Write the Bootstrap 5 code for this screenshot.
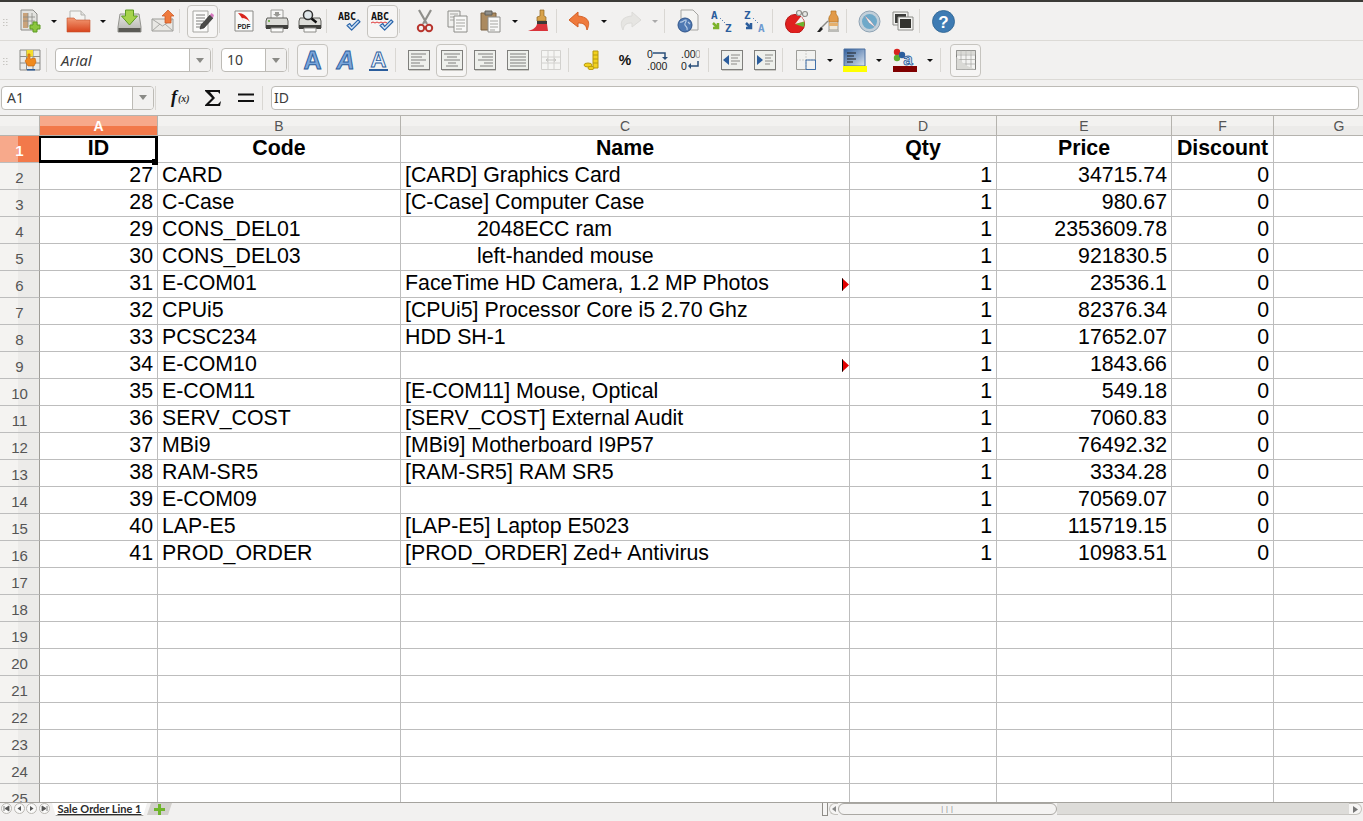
<!DOCTYPE html>
<html>
<head>
  <meta charset="utf-8">
  <meta name="viewport" content="width=device-width">
  <title>Sale Order Line</title>
  <link href="https://cdn.jsdelivr.net/npm/bootstrap@5.3.3/dist/css/bootstrap.min.css" rel="stylesheet"/>
  <style>
    html, body { height: 100%; overflow: hidden; background: #f2f1f0; }
    body { font-family: "Noto Sans", sans-serif; color: #3c3c3c; }
    .app-shell { height: 821px; border-top: 2px solid #3c3b37; }

    .tool-row { height: 38px; border-bottom: 1px solid #dcdad6; box-sizing: content-box; }
    .grip { width: 13px; padding-left: 3px; }
    .slot { width: 33px; height: 33px; flex: none; }
    .slot svg { display: block; }
    .slot-on { width: 33px; height: 33px; flex: none; }
    .slot-on > span { width: 31px; height: 33px; border: 1px solid #c6c4bf; border-radius: 4px; background: #f6f5f4; }
    .drop { width: 16px; flex: none; }
    .drop::after { content: ""; display: block; border-left: 3px solid transparent; border-right: 3px solid transparent; border-top: 3px solid #111; }
    .drop-off::after { border-top-color: #aaa; }
    .tsep { width: 7px; height: 24px; flex: none; }
    .tsep::after { content: ""; display: block; width: 1px; height: 100%; background: #d9d7d3; }
    .ml1 { margin-left: 1px; }
    .ml2 { margin-left: 2px; }

    .combo { height: 24px; border: 1px solid #bdbbb6; border-radius: 4px; background: #fff; flex: none; font-size: 14px; }
    .combo-text { padding-left: 5px; line-height: 22px; }
    .combo-btn { width: 21px; border-left: 1px solid #bdbbb6; background: #f2f1f0; border-radius: 0 3px 3px 0; }
    .combo-btn::after { content: ""; display: block; border-left: 4px solid transparent; border-right: 4px solid transparent; border-top: 5px solid #8a8a86; }
    .font-box { width: 156px; margin-left: 2px; font-size: 15px; }
    .size-box { width: 66px; margin-left: 2px; }
    .name-box { width: 153px; margin-left: 1px; }

    .formula-row { height: 35px; }
    .formula-input { width: 1088px; height: 24px; margin-left: 2px; border: 1px solid #bdbbb6; border-radius: 4px; background: #fff; font-size: 14px; line-height: 22px; padding-left: 2px; }
    .fx-slot { width: 33px; height: 24px; flex: none; }

    .sheet-wrap { height: 687px; overflow: hidden; border-top: 1px solid #b5b3ae; background: #fff; }
    .sheet { width: 1405px; table-layout: fixed; border-collapse: separate; border-spacing: 0; font-family: "Liberation Sans", Arial, sans-serif; color: #000; }
    .w-head { width: 40px; } .w-a { width: 118px; } .w-b { width: 243px; } .w-c { width: 449px; }
    .w-d { width: 147px; } .w-e { width: 175px; } .w-f { width: 102px; } .w-g { width: 131px; }
    .sheet th, .sheet td { padding: 0 4px; border-right: 1px solid #bdbdbd; border-bottom: 1px solid #bdbdbd; white-space: nowrap; overflow: hidden; }
    .sheet td { height: 27px; font-size: 21.33px; line-height: 23px; vertical-align: bottom; padding-bottom: 2px; background: #fff; position: relative; }
    .sheet thead th { height: 20px; font-size: 14px; line-height: 18px; font-weight: 400; color: #555; text-align: center; background: linear-gradient(#f3f2f0 50%, #ecebe9 50%); border-color: #b5b3ae; }
    .sheet tbody th { font-size: 15px; line-height: 18px; font-weight: 400; color: #555; text-align: center; vertical-align: bottom; padding: 0 0 2px; background: linear-gradient(90deg, #f4f3f1 45%, #ecebe9 45%); border-color: #9f9d98; border-bottom-color: #bdbdbd; }
    .sheet thead th.col-on { background: linear-gradient(#f7a98b 50%, #f2794a 50%); color: #fff; font-weight: 700; }
    .sheet tbody th.row-on { background: linear-gradient(90deg, #f7a98b 45%, #f2794a 45%); color: #fff; font-weight: 700; }
    .sheet td.hd { font-weight: 700; text-align: center; }
    .sheet td.num { text-align: right; }
    .sheet td.indent { padding-left: 76px; }
    .sheet td.cur { overflow: visible; z-index: 2; }
    .cur-box { position: absolute; left: -1px; top: 0; right: -1px; bottom: -1px; border: 2px solid #000; border-right-width: 3px; border-bottom-width: 3px; pointer-events: none; }
    .cur-box::after { content: ""; position: absolute; right: -3px; bottom: -5px; width: 6px; height: 6px; background: #000; }
    .more { position: absolute; right: 0; top: 7px; width: 7px; height: 13px; background: #e00000; border-left: 1px solid #000; clip-path: polygon(0 0, 100% 50%, 0 100%); }

    .bottom-bar { height: 13px; border-top: 1px solid #a5a39e; background: #f2f1f0; }
    .nav-dot { width: 11px; height: 11px; margin-right: 1.5px; border: 1px solid #bab8b3; border-radius: 50%; background: #fafaf9; flex: none; }
    .nav-first { margin-left: 1px; }
    .sheet-tab { width: 95px; height: 13px; margin-left: 1px; flex: none; font-family: Lato, sans-serif; font-size: 11px; font-weight: 700; line-height: 12px; text-align: center; color: #2c2c2c; text-decoration: underline; background: #fff; border-bottom: 1px solid #a5a39e; clip-path: polygon(0 0, 100% 0, 96% 100%, 4% 100%); }
    .add-tab { width: 25px; height: 12px; flex: none; background: #d2d0cc; clip-path: polygon(16% 0, 100% 0, 84% 100%, 0 100%); }
    .split-grip { width: 6px; height: 13px; margin-left: 650px; flex: none; border: 1px solid #8f8d88; border-top: 0; background: #f6f5f4; }
    .scroll-btn { width: 9px; height: 12px; margin-left: 1px; flex: none; border: 1px solid #c4c2bd; background: #f6f5f4; }
    .scroll-btn-l { border-radius: 6px 0 0 6px; border-right: 0; }
    .scroll-btn-r { width: 13px; border-radius: 0 6px 6px 0; border-left: 0; margin-left: 0; }
    .scroll-thumb { width: 219px; height: 12px; flex: none; border: 1px solid #aaa8a3; border-radius: 6px; background: #f4f3f2; font-size: 7px; line-height: 10px; letter-spacing: 1px; color: #777; }
    .scroll-trough { width: 292px; height: 12px; flex: none; background: #dddcd9; border-bottom: 1px solid #c8c6c2; }
  </style>
</head>

<body>
  <svg width="0" height="0" class="position-absolute">
    <defs>
      <symbol id="gripDots" viewBox="0 0 5 8">
        <rect x="0" y="0" width="1.5" height="1" fill="#c8c6c2"/><rect x="3" y="0" width="1.5" height="1" fill="#c8c6c2"/>
        <rect x="0" y="3" width="1.5" height="1" fill="#c8c6c2"/><rect x="3" y="3" width="1.5" height="1" fill="#c8c6c2"/>
        <rect x="0" y="6" width="1.5" height="1" fill="#c8c6c2"/><rect x="3" y="6" width="1.5" height="1" fill="#c8c6c2"/>
      </symbol>
      <symbol id="checkMark" viewBox="0 0 16 13">
        <path d="M1 7l3-2 2 3 7-7 2 2-9 9z" fill="#cfe0f3" stroke="#2b66ab" stroke-width="1.3" stroke-linejoin="round"/>
      </symbol>
      <symbol id="alignFrame" viewBox="0 0 24 24">
        <rect x="1.5" y="2.5" width="21" height="19" fill="#eef0ec" stroke="#7f7f7c"/>
        <path d="M2 22.5h21" stroke="#c9c8c4"/>
      </symbol>
      <linearGradient id="folderFill" x1="0" y1="0" x2="0" y2="1"><stop offset="0" stop-color="#f29a74"/><stop offset="1" stop-color="#d8431c"/></linearGradient>
      <linearGradient id="driveFill" x1="0" y1="0" x2="0" y2="1"><stop offset="0" stop-color="#e6e6e3"/><stop offset="1" stop-color="#b3b3af"/></linearGradient>
      <linearGradient id="bgFill" x1="0" y1="0" x2="1" y2="1"><stop offset="0" stop-color="#2f5d9b"/><stop offset="1" stop-color="#dbe5f0"/></linearGradient>
    </defs>
  </svg>

  <div class="app-shell d-flex flex-column">

    <div class="tool-row d-flex align-items-center">
      <div class="grip"><svg width="5" height="8"><use href="#gripDots"/></svg></div>
      <div class="slot d-flex align-items-center justify-content-center">
        <svg width="24" height="24" viewBox="0 0 24 24"><path d="M3 1h12l4 4v16H3z" fill="#e3e3e0" stroke="#8c8c88"/><path d="M5 4h5v15H5z" fill="#c9a27a"/><path d="M5 8h12M5 12h12M10 4v14M14 4v14" stroke="#8a8a86" stroke-width=".8"/><path d="M15 13h4v3h3v4h-3v3h-4v-3h-3v-4h3z" fill="#8cc63f" stroke="#5d9a23"/></svg>
      </div>
      <div class="drop d-flex justify-content-center"></div>
      <div class="slot d-flex align-items-center justify-content-center">
        <svg width="25" height="23" viewBox="0 0 25 23"><path d="M4 1h11l4 4v13H4z" fill="#f4f4f2" stroke="#b5b5b1"/><path d="M15 1v4h4" fill="#e2e2df" stroke="#b5b5b1"/><path d="M1 8h7l2 2h14v12H1z" fill="url(#folderFill)" stroke="#c5502b" stroke-width=".6"/></svg>
      </div>
      <div class="drop d-flex justify-content-center"></div>
      <div class="slot ml2 d-flex align-items-center justify-content-center">
        <svg width="25" height="25" viewBox="0 0 25 25"><path d="M3 5h19l2 13v5H1v-5z" fill="url(#driveFill)" stroke="#94948f"/><path d="M1.500 19h22v4h-22z" fill="#5a5a55"/><path d="M8.500 1h8v6h4l-8 9-8-9h4z" fill="#a6d34d" stroke="#5d9a23"/></svg>
      </div>
      <div class="slot d-flex align-items-center justify-content-center">
        <svg width="24" height="22" viewBox="0 0 24 22"><path d="M1 9h21v12H1z" fill="#e9e8e4" stroke="#9c9c98"/><path d="M1 9l10.500 7L22 9M1 21l8-7M22 21l-8-7" fill="none" stroke="#a8a8a4"/><path d="M17 0l6 6h-3v7h-6V6h-3z" fill="#ee7a3d" stroke="#c9531f" stroke-width=".7"/></svg>
      </div>
      <div class="tsep"></div>
      <div class="slot-on d-flex justify-content-center"><span class="d-flex align-items-center justify-content-center">
        <svg width="22" height="23" viewBox="0 0 22 23"><path d="M1 1h15v21H1z" fill="#fbfbfa" stroke="#a5a5a1"/><path d="M4 5h9M4 8h9M4 11h8M4 14h6M4 17h5" stroke="#7f7f7c"/><path d="M8 19l1-4 9-10 3 3-9 10z" fill="#4a4a48" stroke="#222" stroke-width=".6"/><path d="M18 5l1.500-2 2.500 2-1 3z" fill="#d77ac0"/></svg>
      </span></div>
      <div class="tsep"></div>
      <div class="slot ml1 d-flex align-items-center justify-content-center">
        <svg width="20" height="22" viewBox="0 0 20 22"><path d="M1 1h18v20H1z" fill="#fafaf9" stroke="#8a8a86"/><path d="M4 3c5 0 9 3 12 9-3-3-5-4-8-4l2 4C8 8 6 5 4 3z" fill="#d9251c"/><text x="10" y="19" text-anchor="middle" font-family="Liberation Sans" font-size="6.500" font-weight="700" fill="#222">PDF</text></svg>
      </div>
      <div class="slot d-flex align-items-center justify-content-center">
        <svg width="24" height="24" viewBox="0 0 24 24"><path d="M6 1h12v9H6z" fill="#f7f7f6" stroke="#9c9c98"/><path d="M10 3h4v2h2l-4 3-4-3h2z" fill="#9a9a96"/><path d="M2 9h20l1 3v7H1v-7z" fill="#dcdcd8" stroke="#5f5f5a"/><path d="M1 16h22v4H1z" fill="#3f3f3c"/><path d="M6 19h12v4H6z" fill="#fbfbfa" stroke="#8c8c88"/><path d="M3 12h2" stroke="#5aa02c" stroke-width="1.500"/></svg>
      </div>
      <div class="slot d-flex align-items-center justify-content-center">
        <svg width="24" height="24" viewBox="0 0 24 24"><path d="M2 9h20l1 3v7H1v-7z" fill="#dcdcd8" stroke="#5f5f5a"/><path d="M1 16h22v4H1z" fill="#3f3f3c"/><path d="M6 19h12v4H6z" fill="#fbfbfa" stroke="#8c8c88"/><circle cx="10" cy="6" r="4.500" fill="#dfe6ea" stroke="#333" stroke-width="1.500"/><path d="M13.500 9.500l5 4" stroke="#111" stroke-width="2.500"/></svg>
      </div>
      <div class="tsep"></div>

      <div class="slot d-flex align-items-center justify-content-center">
        <svg width="24" height="22" viewBox="0 0 24 22"><text x="0" y="10" font-family="DejaVu Sans Mono" font-size="10" font-weight="700" fill="#111">ABC</text><use href="#checkMark" x="8" y="9" width="15" height="12"/></svg>
      </div>
      <div class="slot-on d-flex justify-content-center"><span class="d-flex align-items-center justify-content-center">
        <svg width="24" height="22" viewBox="0 0 24 22"><text x="0" y="10" font-family="DejaVu Sans Mono" font-size="10" font-weight="700" fill="#111">ABC</text><path d="M0 13l2-1 2 1 2-1 2 1 2-1 2 1 2-1 2 1" fill="none" stroke="#d22" stroke-width=".9"/><use href="#checkMark" x="8" y="9" width="15" height="12"/></svg>
      </span></div>
      <div class="tsep"></div>
      <div class="slot ml2 d-flex align-items-center justify-content-center">
        <svg width="18" height="24" viewBox="0 0 18 24"><path d="M3 1l8 14M15 1L7 15" stroke="#8f8f8b" stroke-width="2.200"/><circle cx="5" cy="19" r="3.200" fill="none" stroke="#b8352e" stroke-width="2"/><circle cx="13" cy="19" r="3.200" fill="none" stroke="#b8352e" stroke-width="2"/></svg>
      </div>
      <div class="slot d-flex align-items-center justify-content-center">
        <svg width="21" height="23" viewBox="0 0 21 23"><path d="M1 1h12v16H1z" fill="#f1f1ef" stroke="#8c8c88"/><path d="M3 4h8M3 7h8M3 10h8" stroke="#a5a5a1"/><path d="M7 6h13v16H7z" fill="#f9f9f8" stroke="#8c8c88"/><path d="M9 10h9M9 13h9M9 16h9M9 19h6" stroke="#a5a5a1"/></svg>
      </div>
      <div class="slot d-flex align-items-center justify-content-center">
        <svg width="21" height="23" viewBox="0 0 21 23"><path d="M1 3h15v17H1z" fill="#ab8a5f" stroke="#7a6040"/><path d="M5 1h7v4H5z" fill="#8f8f8b" stroke="#5f5f5b"/><path d="M8 7h12v15H8z" fill="#f9f9f8" stroke="#8c8c88"/><path d="M10 11h8M10 14h8M10 17h8M10 20h5" stroke="#a5a5a1"/></svg>
      </div>
      <div class="drop d-flex justify-content-center"></div>
      <div class="slot d-flex align-items-center justify-content-center">
        <svg width="24" height="24" viewBox="0 0 24 24"><path d="M12 1h4v6l2 1v4h-9V8l3-1z" fill="#d8a24a" stroke="#8f6520" stroke-width=".7"/><path d="M9 12h10v3H9z" fill="#3a3a38"/><path d="M9 15h10l1 7H0c4-1 8-3 9-7z" fill="#d9333a"/></svg>
      </div>
      <div class="tsep"></div>
      <div class="slot d-flex align-items-center justify-content-center">
        <svg width="23" height="20" viewBox="0 0 23 20"><path d="M10 1L1 9l9 7v-4c5 0 8 1 9 7 3-6 3-13-9-14z" fill="#ef7a3c" stroke="#d55f24"/></svg>
      </div>
      <div class="drop d-flex justify-content-center"></div>
      <div class="slot ml2 d-flex align-items-center justify-content-center">
        <svg width="22" height="20" viewBox="0 0 22 20"><path d="M12 1l9 8-9 7v-4C7 12 4 13 3 19 0 13 0 6 12 5z" fill="#e6e5e2" stroke="#dcdbd8"/></svg>
      </div>
      <div class="drop drop-off d-flex justify-content-center"></div>
      <div class="tsep ml1"></div>

      <div class="slot d-flex align-items-center justify-content-center">
        <svg width="22" height="24" viewBox="0 0 22 24"><path d="M4 1h12l5 5v15H4z" fill="#f4f4f2" stroke="#a5a5a1"/><circle cx="8" cy="16" r="7" fill="#4f79b3" stroke="#2f5489"/><path d="M3 13c3 1 3-2 6-2 1 2-2 3-1 5s3 2 2 5M11 13l2 2" fill="none" stroke="#b9cde5" stroke-width="1.200"/></svg>
      </div>
      <div class="slot ml1 d-flex align-items-center justify-content-center">
        <svg width="22" height="32" viewBox="0 -5 22 32"><text x="0" y="8.500" font-family="DejaVu Sans Mono" font-size="11" font-weight="700" fill="#2b5d9c">A</text><text x="14" y="21.500" font-family="DejaVu Sans Mono" font-size="11" font-weight="700" fill="#2b5d9c">Z</text><path d="M2 13l5 5M2 18h5v-5" fill="none" stroke="#7cb32a" stroke-width="2.500"/><path d="M9 8l5 5" stroke="#2b5d9c" stroke-dasharray="1 2"/></svg>
      </div>
      <div class="slot d-flex align-items-center justify-content-center">
        <svg width="22" height="32" viewBox="0 -5 22 32"><text x="0" y="8.500" font-family="DejaVu Sans Mono" font-size="11" font-weight="700" fill="#2b5d9c">Z</text><text x="14" y="21.500" font-family="DejaVu Sans Mono" font-size="11" font-weight="700" fill="#6f9bd1">A</text><path d="M2 13l5 5M2 18h5v-5" fill="none" stroke="#2b5d9c" stroke-width="2.500"/><path d="M9 8l5 5" stroke="#2b5d9c" stroke-dasharray="1 2"/></svg>
      </div>
      <div class="tsep ml1"></div>
      <div class="slot d-flex align-items-center justify-content-center">
        <svg width="24" height="24" viewBox="0 0 24 24"><circle cx="11" cy="15" r="9.500" fill="#e0201f" stroke="#b81514"/><path d="M11 15l9-2.500c1 2 .5 4-.5 5.500z" fill="#6bb52f"/><path d="M11 15l9-2.500c-.5-2-2-4-3-5z" fill="#f4f3f1"/><circle cx="15" cy="4" r="2.500" fill="#e8e8e5" stroke="#8c8c88" stroke-width="1.200"/><circle cx="21" cy="5" r="2.500" fill="#e8e8e5" stroke="#8c8c88" stroke-width="1.200"/></svg>
      </div>
      <div class="slot d-flex align-items-center justify-content-center">
        <svg width="23" height="24" viewBox="0 0 23 24"><path d="M12 9h9v12h-9z" fill="#efe9dc" stroke="#9c9c98"/><path d="M14 2h5v3l2 3v5h-9V8l2-3z" fill="#e29a48" stroke="#b57526" stroke-width=".7"/><path d="M12 14h9v3h-9z" fill="#e5b06c"/><path d="M11 21h11v2H11z" fill="#bcbcb8"/><path d="M11 12L3 20" stroke="#8a8a86" stroke-width="1.500"/><path d="M4 18l2 2-3 3H0z" fill="#222"/></svg>
      </div>
      <div class="tsep ml1"></div>
      <div class="slot d-flex align-items-center justify-content-center">
        <svg width="23" height="23" viewBox="0 0 23 23"><circle cx="11.500" cy="11.500" r="10.500" fill="#c2d0da" stroke="#8ea2b3" stroke-width="1"/><circle cx="11.500" cy="11.500" r="7.500" fill="#6fa9c9"/><path d="M7 6l5.500 5 5 6.500-6.500-5z" fill="#e8534c"/><path d="M7 6l4 6.500 6.500 5-5-6.500z" fill="#eef3f6"/></svg>
      </div>
      <div class="slot d-flex align-items-center justify-content-center">
        <svg width="22" height="20" viewBox="0 0 22 20"><path d="M1 1h15v13H1z" fill="#f2f2f0" stroke="#8c8c88"/><path d="M3 3h11v9H3z" fill="#3c3c3a"/><path d="M6 6h15v13H6z" fill="#f2f2f0" stroke="#8c8c88"/><path d="M8 8h11v9H8z" fill="#33332f"/></svg>
      </div>
      <div class="tsep"></div>
      <div class="slot ml1 d-flex align-items-center justify-content-center">
        <svg width="23" height="23" viewBox="0 0 23 23"><circle cx="11.500" cy="11.500" r="11" fill="#3e7bb3" stroke="#2c628f" stroke-width=".8"/><text x="11.500" y="17.500" text-anchor="middle" font-family="Liberation Sans" font-size="17" font-weight="700" fill="#fff">?</text></svg>
      </div>
    </div>

    <div class="tool-row d-flex align-items-center">
      <div class="grip"><svg width="5" height="8"><use href="#gripDots"/></svg></div>
      <div class="slot d-flex align-items-center justify-content-center">
        <svg width="22" height="22" viewBox="0 0 22 22"><path d="M1 1h20v20H1z" fill="#eaeae7" stroke="#8c8c88"/><path d="M1 7.500h20M1 14h20M7.500 1v20M14 1v20" stroke="#8c8c88"/><path d="M7.500 1H14v6.500H7.500z" fill="#f4dc2e"/><path d="M9 8V5h2v5l5-1 1 4-2 4H9l-3-5z" fill="#f08a1d" stroke="#c5620a" stroke-width=".6"/><path d="M8 20h8v1.500H8z" fill="#2b5d9c"/></svg>
      </div>
      <div class="tsep"></div>
      <div class="combo font-box d-flex">
        <div class="combo-text flex-grow-1 fst-italic">Arial</div>
        <div class="combo-btn d-flex align-items-center justify-content-center"></div>
      </div>
      <div class="tsep ml1"></div>
      <div class="combo size-box d-flex">
        <div class="combo-text flex-grow-1">10</div>
        <div class="combo-btn d-flex align-items-center justify-content-center"></div>
      </div>
      <div class="tsep ml1"></div>

      <div class="slot-on ml1 d-flex justify-content-center"><span class="d-flex align-items-center justify-content-center">
        <svg width="29" height="31" viewBox="0 0 29 31"><text x="14.500" y="24" text-anchor="middle" font-family="Liberation Sans" font-size="25" font-weight="700" fill="#7aa5da" stroke="#2b5d9c" stroke-width=".9">A</text></svg>
      </span></div>
      <div class="slot d-flex align-items-center justify-content-center">
        <svg width="33" height="33" viewBox="0 0 33 33"><text x="16.500" y="25" text-anchor="middle" font-family="Liberation Sans" font-size="25" font-style="italic" font-weight="700" fill="#7aa5da" stroke="#2b5d9c" stroke-width=".9">A</text></svg>
      </div>
      <div class="slot d-flex align-items-center justify-content-center">
        <svg width="33" height="33" viewBox="0 0 33 33"><text x="16.500" y="23" text-anchor="middle" font-family="Liberation Sans" font-size="22" font-weight="700" fill="#e8f0fa" stroke="#2b5d9c" stroke-width=".9">A</text><path d="M7 26h19" stroke="#2b5d9c" stroke-width="2"/></svg>
      </div>
      <div class="tsep"></div>

      <div class="slot d-flex align-items-center justify-content-center">
        <svg width="24" height="24" viewBox="0 0 24 24"><use href="#alignFrame"/><path d="M4 6h15M4 9h11M4 12h15M4 15h9M4 18h13" stroke="#7f7f7c"/></svg>
      </div>
      <div class="slot-on d-flex justify-content-center"><span class="d-flex align-items-center justify-content-center">
        <svg width="24" height="24" viewBox="0 0 24 24"><use href="#alignFrame"/><path d="M4 6h16M7 9h10M4 12h16M8 15h8M6 18h12" stroke="#7f7f7c"/></svg>
      </span></div>
      <div class="slot d-flex align-items-center justify-content-center">
        <svg width="24" height="24" viewBox="0 0 24 24"><use href="#alignFrame"/><path d="M5 6h15M9 9h11M5 12h15M11 15h9M7 18h13" stroke="#7f7f7c"/></svg>
      </div>
      <div class="slot d-flex align-items-center justify-content-center">
        <svg width="24" height="24" viewBox="0 0 24 24"><use href="#alignFrame"/><path d="M4 6h16M4 9h16M4 12h16M4 15h16M4 18h16" stroke="#7f7f7c"/></svg>
      </div>
      <div class="slot d-flex align-items-center justify-content-center">
        <svg width="20" height="20" viewBox="0 0 20 20"><path d="M.5.5h19v19H.5zM.5 7h19M.5 13h19M7 .5v19M13 .5v19" fill="#f5f5f3" stroke="#d2d1ce"/><path d="M5 10h10M5 10l2-1.500M5 10l2 1.500M15 10l-2-1.500M15 10l-2 1.500" stroke="#c4c3c0"/></svg>
      </div>
      <div class="tsep ml1"></div>

      <div class="slot d-flex align-items-center justify-content-center">
        <svg width="18" height="20" viewBox="0 0 18 20"><path d="M10 1h5v17h-5z" fill="#f3d21f" stroke="#b69a10"/><path d="M10 5h5M10 9h5M10 13h5" stroke="#b69a10"/><ellipse cx="5" cy="15" rx="4" ry="2" fill="#f3d21f" stroke="#b69a10"/><ellipse cx="8" cy="18" rx="3" ry="1.700" fill="#f3d21f" stroke="#b69a10"/></svg>
      </div>
      <div class="slot d-flex align-items-center justify-content-center">
        <svg width="16" height="16" viewBox="0 0 16 16"><text x="8" y="13" text-anchor="middle" font-family="Liberation Sans" font-size="14" font-weight="700" fill="#111">%</text></svg>
      </div>
      <div class="slot d-flex align-items-center justify-content-center">
        <svg width="21" height="24" viewBox="0 0 21 24"><text x="0" y="10" font-family="Liberation Sans" font-size="10.500" fill="#222">0</text><path d="M6 5h12v5" fill="none" stroke="#2b4f7a" stroke-width="1.500"/><path d="M15 9h6l-3 3z" fill="#2b4f7a"/><text x="0" y="22" font-family="Liberation Sans" font-size="10.500" fill="#222">.000</text></svg>
      </div>
      <div class="slot d-flex align-items-center justify-content-center">
        <svg width="19" height="24" viewBox="0 0 19 24"><text x="0" y="10" font-family="Liberation Sans" font-size="10.500" fill="#222">.00</text><text x="14" y="10" font-family="Liberation Sans" font-size="10.500" fill="#999">0</text><text x="0" y="22" font-family="Liberation Sans" font-size="10.500" fill="#222">0</text><path d="M17 13v5H9" fill="none" stroke="#2b4f7a" stroke-width="1.500"/><path d="M10 15v6l-3-3z" fill="#2b4f7a"/></svg>
      </div>
      <div class="tsep ml1"></div>

      <div class="slot d-flex align-items-center justify-content-center">
        <svg width="24" height="24" viewBox="0 0 24 24"><use href="#alignFrame"/><path d="M9 7v10L3 12z" fill="#2b5d9c"/><path d="M11 7h9M11 10h7M11 13h9M11 16h6" stroke="#8a8a86"/></svg>
      </div>
      <div class="slot d-flex align-items-center justify-content-center">
        <svg width="24" height="24" viewBox="0 0 24 24"><use href="#alignFrame"/><path d="M4 7v10l6-5z" fill="#2b5d9c"/><path d="M12 7h8M12 10h6M12 13h8M12 16h5" stroke="#8a8a86"/></svg>
      </div>
      <div class="tsep ml1"></div>

      <div class="slot d-flex align-items-center justify-content-center">
        <svg width="22" height="22" viewBox="0 0 22 22"><path d="M1.500 1.500h19v19h-19z" fill="#f2f2f0" stroke="#9c9c98"/><path d="M1.500 11h19M11 1.500v19" stroke="#a5a5a1" stroke-dasharray="1 2"/><path d="M11 11h9.500v9.500H11z" fill="none" stroke="#3f6fa8"/></svg>
      </div>
      <div class="drop d-flex justify-content-center"></div>
      <div class="slot d-flex align-items-center justify-content-center">
        <svg width="24" height="24" viewBox="0 0 24 24"><path d="M1 1h21v17H1z" fill="url(#bgFill)" stroke="#4a6f9f"/><path d="M4 5h9M4 8h7M4 11h9M4 14h6" stroke="#1e1e1e"/><path d="M0 18h24v6H0z" fill="#ff0"/></svg>
      </div>
      <div class="drop d-flex justify-content-center"></div>
      <div class="slot ml1 d-flex align-items-center justify-content-center">
        <svg width="24" height="24" viewBox="0 0 24 24"><circle cx="4" cy="4" r="3.200" fill="#d9231f"/><circle cx="4" cy="10" r="3.200" fill="#5fae2e"/><circle cx="9" cy="7" r="3.200" fill="#2b5d9c"/><text x="15" y="17" text-anchor="middle" font-family="Liberation Sans" font-size="17" font-weight="700" fill="#cfdff2" stroke="#2b5d9c" stroke-width=".8">a</text><path d="M0 18h24v6H0z" fill="#800000"/></svg>
      </div>
      <div class="drop ml1 d-flex justify-content-center"></div>
      <div class="tsep ml2"></div>
      <div class="slot-on ml2 d-flex justify-content-center"><span class="d-flex align-items-center justify-content-center">
        <svg width="22" height="22" viewBox="0 0 22 22"><path d="M1.500 1.500h19v19h-19z" fill="#f3f3f1" stroke="#7f7f7c"/><path d="M1.500 6h19M1.500 10.500h19M1.500 15h19M6 1.500v19M11 1.500v19M16 1.500v19" stroke="#a5a5a1" stroke-width=".7"/><path d="M1.500 20.500V8l6 5.500 4 3 9 4z" fill="#d9d9d5"/><path d="M1.500 1.500h19v4h-19z" fill="#c9c9c5" opacity=".6"/></svg>
      </span></div>
    </div>

    <div class="formula-row d-flex align-items-center">
      <div class="combo name-box d-flex">
        <div class="combo-text flex-grow-1">A1</div>
        <div class="combo-btn d-flex align-items-center justify-content-center"></div>
      </div>
      <div class="tsep ml1"></div>
      <div class="fx-slot ml1 d-flex align-items-center justify-content-center">
        <svg width="26" height="20" viewBox="0 0 26 20"><text x="4" y="15" font-family="Liberation Serif" font-size="18" font-style="italic" font-weight="700" fill="#111">f</text><text x="11" y="14" font-family="Liberation Serif" font-size="10" font-style="italic" font-weight="700" fill="#333">(x)</text></svg>
      </div>
      <div class="fx-slot d-flex align-items-center justify-content-center">
        <svg width="18" height="18" viewBox="0 0 18 18"><path d="M1 1h15v4l-2-2H6l5 6-6 6h9l3-3-1 5H1v-1l7-7L1 2z" fill="#111"/></svg>
      </div>
      <div class="fx-slot d-flex align-items-center justify-content-center">
        <svg width="16" height="10" viewBox="0 0 16 10"><path d="M0 1.500h16M0 8h16" stroke="#111" stroke-width="2.200"/></svg>
      </div>
      <div class="tsep"></div>
      <div class="formula-input">ID</div>
    </div>

    <div class="sheet-wrap">
      <table class="sheet">
        <colgroup>
          <col class="w-head"><col class="w-a"><col class="w-b"><col class="w-c"><col class="w-d"><col class="w-e"><col class="w-f"><col class="w-g">
        </colgroup>
        <thead>
          <tr><th></th><th class="col-on">A</th><th>B</th><th>C</th><th>D</th><th>E</th><th>F</th><th>G</th></tr>
        </thead>
        <tbody>
          <tr><th class="row-on">1</th><td class="hd cur">ID<span class="cur-box"></span></td><td class="hd">Code</td><td class="hd">Name</td><td class="hd">Qty</td><td class="hd">Price</td><td class="hd">Discount</td><td></td></tr>
          <tr><th>2</th><td class="num">27</td><td>CARD</td><td>[CARD] Graphics Card</td><td class="num">1</td><td class="num">34715.74</td><td class="num">0</td><td></td></tr>
          <tr><th>3</th><td class="num">28</td><td>C-Case</td><td>[C-Case] Computer Case</td><td class="num">1</td><td class="num">980.67</td><td class="num">0</td><td></td></tr>
          <tr><th>4</th><td class="num">29</td><td>CONS_DEL01</td><td class="indent">2048ECC ram</td><td class="num">1</td><td class="num">2353609.78</td><td class="num">0</td><td></td></tr>
          <tr><th>5</th><td class="num">30</td><td>CONS_DEL03</td><td class="indent">left-handed mouse</td><td class="num">1</td><td class="num">921830.5</td><td class="num">0</td><td></td></tr>
          <tr><th>6</th><td class="num">31</td><td>E-COM01</td><td>FaceTime HD Camera, 1.2 MP Photos<span class="more"></span></td><td class="num">1</td><td class="num">23536.1</td><td class="num">0</td><td></td></tr>
          <tr><th>7</th><td class="num">32</td><td>CPUi5</td><td>[CPUi5] Processor Core i5 2.70 Ghz</td><td class="num">1</td><td class="num">82376.34</td><td class="num">0</td><td></td></tr>
          <tr><th>8</th><td class="num">33</td><td>PCSC234</td><td>HDD SH-1</td><td class="num">1</td><td class="num">17652.07</td><td class="num">0</td><td></td></tr>
          <tr><th>9</th><td class="num">34</td><td>E-COM10</td><td><span class="more"></span></td><td class="num">1</td><td class="num">1843.66</td><td class="num">0</td><td></td></tr>
          <tr><th>10</th><td class="num">35</td><td>E-COM11</td><td>[E-COM11] Mouse, Optical</td><td class="num">1</td><td class="num">549.18</td><td class="num">0</td><td></td></tr>
          <tr><th>11</th><td class="num">36</td><td>SERV_COST</td><td>[SERV_COST] External Audit</td><td class="num">1</td><td class="num">7060.83</td><td class="num">0</td><td></td></tr>
          <tr><th>12</th><td class="num">37</td><td>MBi9</td><td>[MBi9] Motherboard I9P57</td><td class="num">1</td><td class="num">76492.32</td><td class="num">0</td><td></td></tr>
          <tr><th>13</th><td class="num">38</td><td>RAM-SR5</td><td>[RAM-SR5] RAM SR5</td><td class="num">1</td><td class="num">3334.28</td><td class="num">0</td><td></td></tr>
          <tr><th>14</th><td class="num">39</td><td>E-COM09</td><td></td><td class="num">1</td><td class="num">70569.07</td><td class="num">0</td><td></td></tr>
          <tr><th>15</th><td class="num">40</td><td>LAP-E5</td><td>[LAP-E5] Laptop E5023</td><td class="num">1</td><td class="num">115719.15</td><td class="num">0</td><td></td></tr>
          <tr><th>16</th><td class="num">41</td><td>PROD_ORDER</td><td>[PROD_ORDER] Zed+ Antivirus</td><td class="num">1</td><td class="num">10983.51</td><td class="num">0</td><td></td></tr>
          <tr><th>17</th><td></td><td></td><td></td><td></td><td></td><td></td><td></td></tr>
          <tr><th>18</th><td></td><td></td><td></td><td></td><td></td><td></td><td></td></tr>
          <tr><th>19</th><td></td><td></td><td></td><td></td><td></td><td></td><td></td></tr>
          <tr><th>20</th><td></td><td></td><td></td><td></td><td></td><td></td><td></td></tr>
          <tr><th>21</th><td></td><td></td><td></td><td></td><td></td><td></td><td></td></tr>
          <tr><th>22</th><td></td><td></td><td></td><td></td><td></td><td></td><td></td></tr>
          <tr><th>23</th><td></td><td></td><td></td><td></td><td></td><td></td><td></td></tr>
          <tr><th>24</th><td></td><td></td><td></td><td></td><td></td><td></td><td></td></tr>
          <tr><th>25</th><td></td><td></td><td></td><td></td><td></td><td></td><td></td></tr>
        </tbody>
      </table>
    </div>

    <div class="bottom-bar d-flex align-items-start">
      <div class="nav-dot nav-first d-flex align-items-center justify-content-center"><svg width="7" height="7" viewBox="0 0 7 7"><path d="M1 1v5M6 1v5L2 3.500z" fill="#555" stroke="#555" stroke-width=".8"/></svg></div>
      <div class="nav-dot d-flex align-items-center justify-content-center"><svg width="7" height="7" viewBox="0 0 7 7"><path d="M5 1v5L1.500 3.500z" fill="#555"/></svg></div>
      <div class="nav-dot d-flex align-items-center justify-content-center"><svg width="7" height="7" viewBox="0 0 7 7"><path d="M2 1v5l3.500-2.500z" fill="#555"/></svg></div>
      <div class="nav-dot d-flex align-items-center justify-content-center"><svg width="7" height="7" viewBox="0 0 7 7"><path d="M6 1v5M1 1v5l4-2.500z" fill="#555" stroke="#555" stroke-width=".8"/></svg></div>
      <div class="sheet-tab">Sale Order Line 1</div>
      <div class="add-tab d-flex align-items-center justify-content-center">
        <svg width="11" height="11" viewBox="0 0 11 11"><path d="M4 0h3v4h4v3H7v4H4V7H0V4h4z" fill="#6fb52c"/></svg>
      </div>
      <div class="split-grip"></div>
      <div class="scroll-btn scroll-btn-l d-flex align-items-center justify-content-center"><svg width="4" height="6" viewBox="0 0 4 6"><path d="M4 0v6L0 3z" fill="#888"/></svg></div>
      <div class="scroll-thumb text-center">|||</div>
      <div class="scroll-trough"></div>
      <div class="scroll-btn scroll-btn-r d-flex align-items-center justify-content-center"><svg width="5" height="7" viewBox="0 0 5 7"><path d="M0 0v7l5-3.500z" fill="#777"/></svg></div>
    </div>
  </div>
</body>
</html>
